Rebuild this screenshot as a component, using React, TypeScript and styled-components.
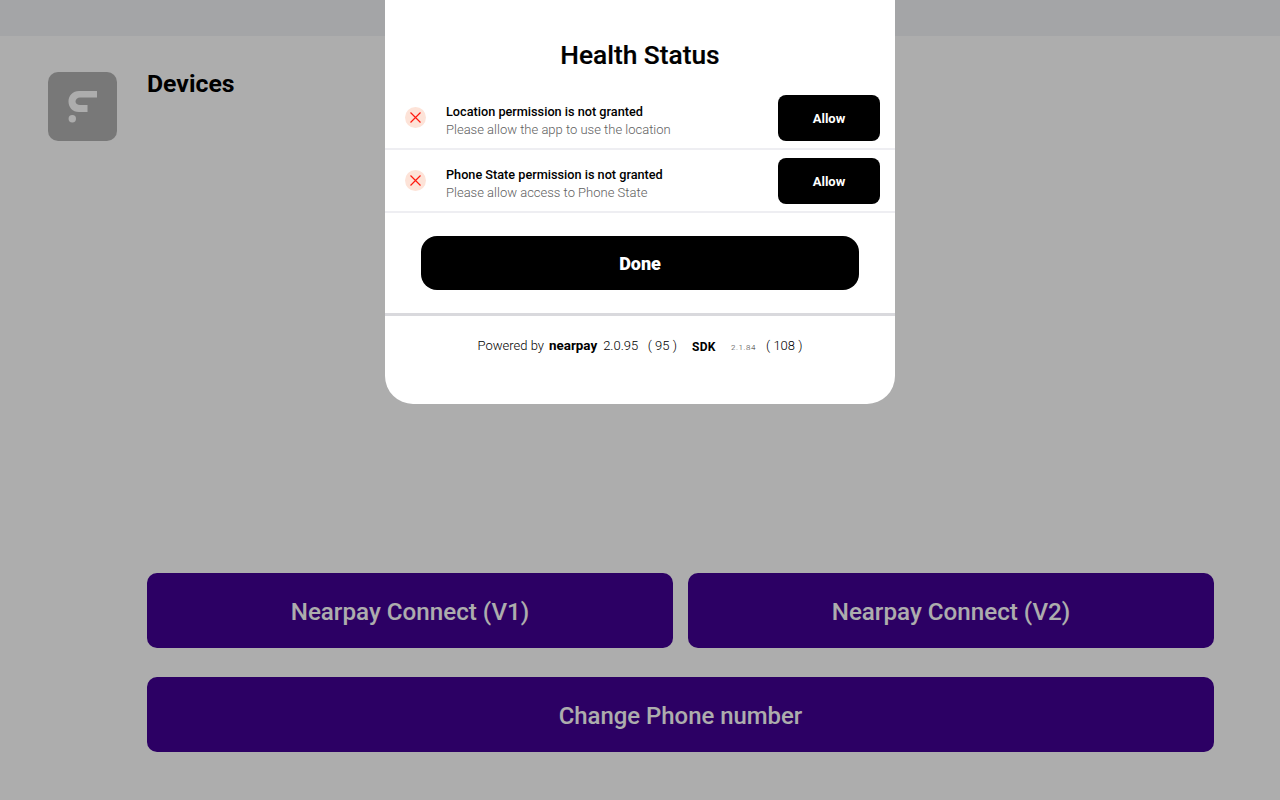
import React, { FC } from 'react';
import styled, { createGlobalStyle } from 'styled-components';

/* ---------- STYLES ---------- */

const GlobalStyle = createGlobalStyle`
    html, body {
        margin: 0;
        padding: 0;
        background: #ffffff;
        font-family: Roboto, "Liberation Sans", sans-serif;
    }
    * {
        box-sizing: border-box;
    }
`;

const SPage = styled.div`
    position: relative;
    width: 1280px;
    height: 800px;
    overflow: hidden;
    display: flex;
    flex-direction: column;
`;

const STopBar = styled.div`
    height: 36px;
    flex: none;
    background-color: #f2f3f6;
`;

const SMain = styled.main`
    flex: 1;
    display: flex;
    padding: 36px 66px 48px 48px;
    gap: 30px;
`;

const SLogo = styled.div`
    width: 69px;
    height: 69px;
    flex: none;
    border-radius: 10px;
    background-color: #b2b2b2;
    display: flex;
    align-items: center;
    justify-content: center;
`;

const SContent = styled.div`
    flex: 1;
    display: flex;
    flex-direction: column;
`;

const STitle = styled.h1`
    margin: 0;
    font-size: 24.8px;
    line-height: 24px;
    font-weight: 700;
    color: #000000;
`;

const SActions = styled.div`
    margin-top: auto;
    display: grid;
    grid-template-columns: 1fr 1fr;
    column-gap: 15px;
    row-gap: 29px;
`;

const SActionButton = styled.button<{ $wide?: boolean }>`
    grid-column: ${({ $wide }) => ($wide ? '1 / span 2' : 'auto')};
    height: 75px;
    padding: 2px 0 0;
    border: none;
    border-radius: 10px;
    background-color: #410094;
    color: #ffffff;
    font-family: inherit;
    font-size: ${({ $wide }) => ($wide ? '23.9px' : '24.2px')};
    font-weight: 500;
`;

const SOverlay = styled.div`
    position: absolute;
    inset: 0;
    background-color: rgba(0, 0, 0, 0.32);
`;

const SModal = styled.div`
    position: absolute;
    top: 0;
    left: 385px;
    width: 510px;
    height: 404px;
    background-color: #ffffff;
    border-radius: 0 0 28px 28px;
    display: flex;
    flex-direction: column;
`;

const SModalTitle = styled.h2`
    margin: 0;
    padding-top: 40px;
    height: 87px;
    font-size: 26.3px;
    line-height: 30px;
    font-weight: 500;
    -webkit-text-stroke: 0.2px #000000;
    text-align: center;
    color: #000000;
`;

const SRow = styled.div`
    height: 63px;
    flex: none;
    display: flex;
    align-items: flex-start;
    padding: 8px 15px 0 20px;
    border-bottom: 2px solid #eeeef2;
`;

const SStatusIcon = styled.div`
    width: 21px;
    height: 21px;
    margin-top: 12px;
    flex: none;
    border-radius: 50%;
    background-color: #fde3d8;
    display: flex;
    align-items: center;
    justify-content: center;
`;

const SRowText = styled.div`
    flex: 1;
    padding: 8px 0 0 20px;
`;

const SRowTitle = styled.div`
    font-size: 12.7px;
    line-height: 18px;
    font-weight: 500;
    color: #000000;
`;

const SRowHint = styled.div`
    font-size: 13px;
    line-height: 18px;
    font-weight: 300;
    color: #606060;
`;

const SAllowButton = styled.button`
    width: 102px;
    height: 46px;
    border: none;
    border-radius: 8px;
    background-color: #000000;
    color: #ffffff;
    font-family: inherit;
    font-size: 13px;
    font-weight: 700;
`;

const SDoneWrap = styled.div`
    height: 103px;
    flex: none;
    padding: 23px 36px 0;
    border-bottom: 3px solid #d9d9dd;
`;

const SDoneButton = styled.button`
    width: 100%;
    height: 54px;
    border: none;
    border-radius: 16px;
    background-color: #000000;
    color: #ffffff;
    font-family: inherit;
    font-size: 18px;
    font-weight: 900;
`;

const SFooter = styled.div`
    display: flex;
    justify-content: center;
    align-items: center;
    height: 58px;
    font-size: 13px;
    font-weight: 300;
    color: #000000;
    white-space: nowrap;
`;

const SBrand = styled.span`
    font-size: 13.4px;
    font-weight: 700;
    color: #000000;
    margin: 0 6px 0 5px;
`;

const SSdk = styled.span`
    font-size: 12px;
    font-weight: 700;
    color: #000000;
    margin: 4px 15px 0 15px;
    letter-spacing: 0.4px;
`;

const SSdkVersion = styled.span`
    font-size: 8px;
    letter-spacing: 0.6px;
    color: #333333;
    margin: 5px 10px 0 0;
`;

/* ---------- COMPONENT ---------- */

const CloseIcon: FC = () => (
    <svg width="11" height="11" viewBox="0 0 11 11" fill="none">
        <path d="M0.5 0.5L10.5 10.5M10.5 0.5L0.5 10.5" stroke="#ff1a10" strokeWidth="1.2" />
    </svg>
);

const LogoMark: FC = () => (
    <svg width="29" height="32" viewBox="0 0 29 32" fill="none">
        <path
            d="M29 0V6.5H12C9.5 6.5 7.5 8.2 7.5 10.5C7.5 12.7 9.5 14 12 14H19.5V21H11C4.5 21 0.5 16.3 0.5 10.5C0.5 4.5 5 0 11 0Z"
            fill="#ffffff"
        />
        <circle cx="4.3" cy="27.7" r="3.7" fill="#ffffff" />
    </svg>
);

const permissions = [
    { title: 'Location permission is not granted', hint: 'Please allow the app to use the location' },
    { title: 'Phone State permission is not granted', hint: 'Please allow access to Phone State' },
];

const App: FC = () => (
    <SPage>
        <GlobalStyle />
        <STopBar />
        <SMain>
            <SLogo>
                <LogoMark />
            </SLogo>
            <SContent>
                <STitle>Devices</STitle>
                <SActions>
                    <SActionButton>Nearpay Connect (V1)</SActionButton>
                    <SActionButton>Nearpay Connect (V2)</SActionButton>
                    <SActionButton $wide>Change Phone number</SActionButton>
                </SActions>
            </SContent>
        </SMain>
        <SOverlay />
        <SModal>
            <SModalTitle>Health Status</SModalTitle>
            {permissions.map(({ title, hint }) => (
                <SRow key={title}>
                    <SStatusIcon>
                        <CloseIcon />
                    </SStatusIcon>
                    <SRowText>
                        <SRowTitle>{title}</SRowTitle>
                        <SRowHint>{hint}</SRowHint>
                    </SRowText>
                    <SAllowButton>Allow</SAllowButton>
                </SRow>
            ))}
            <SDoneWrap>
                <SDoneButton>Done</SDoneButton>
            </SDoneWrap>
            <SFooter>
                Powered by
                <SBrand>nearpay</SBrand>
                2.0.95
                <span>&nbsp;&nbsp;&nbsp;( 95 )</span>
                <SSdk>SDK</SSdk>
                <SSdkVersion>2.1.84</SSdkVersion>
                <span>( 108 )</span>
            </SFooter>
        </SModal>
    </SPage>
);

export default App;
